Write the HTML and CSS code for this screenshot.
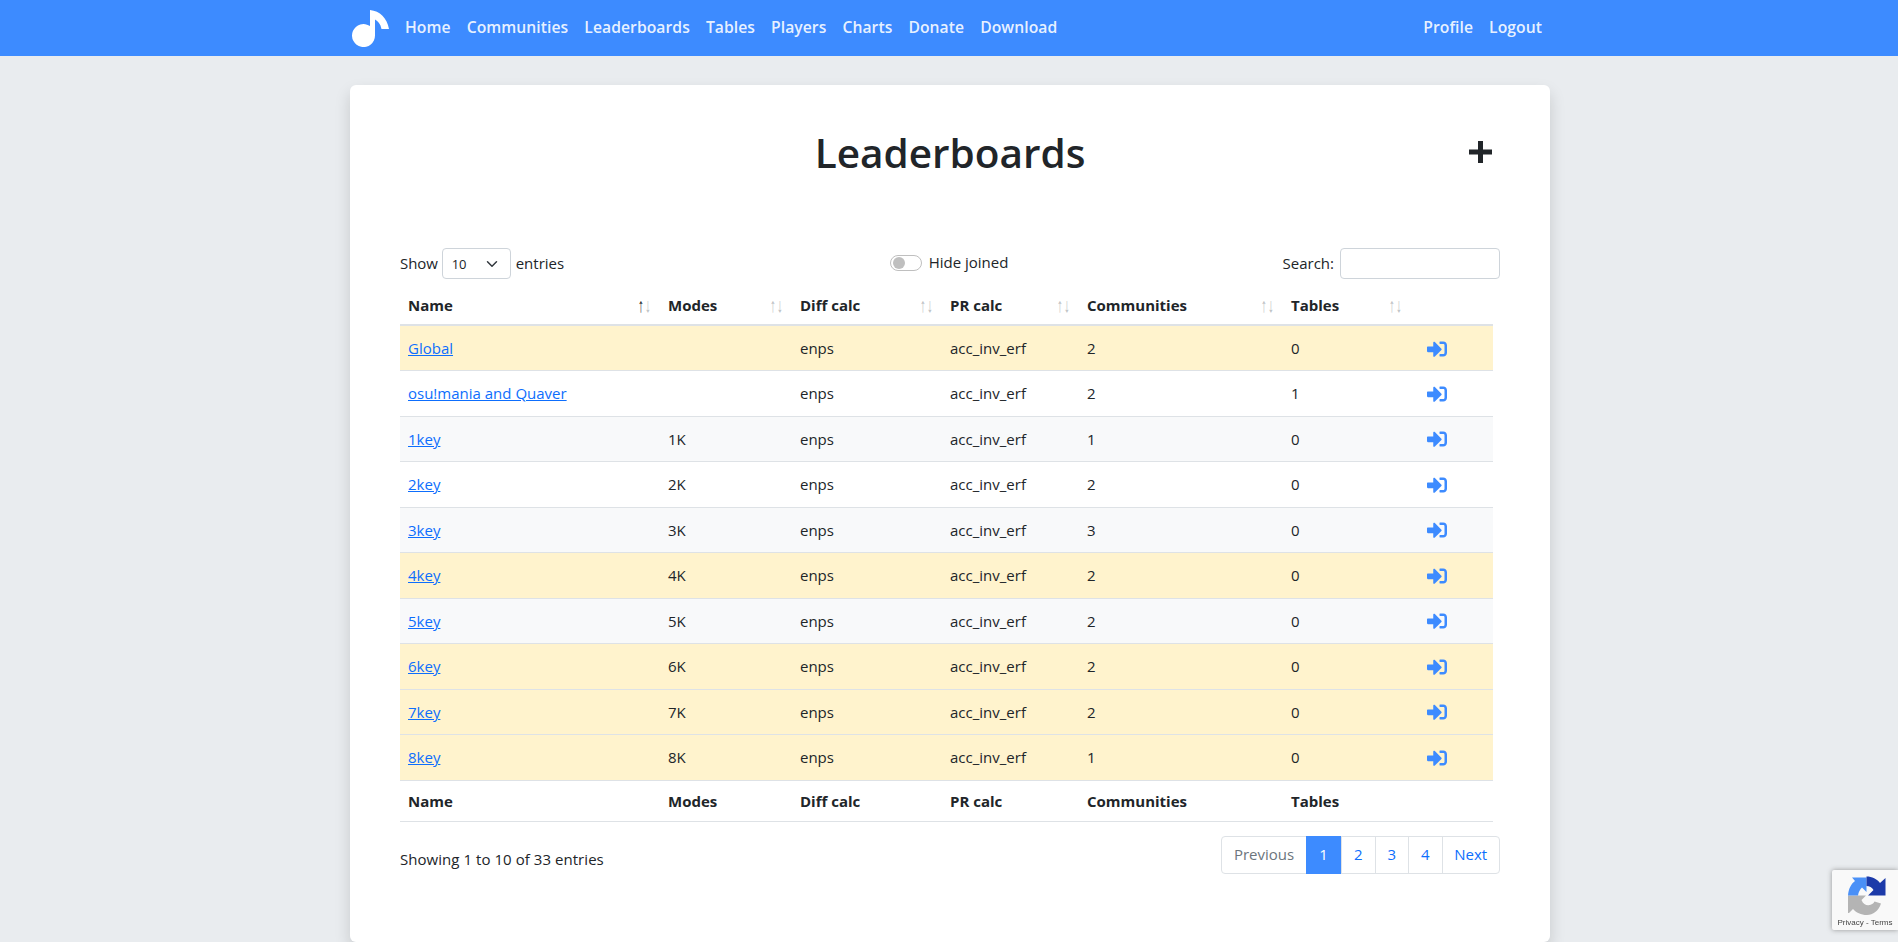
FILE: index.html
```html
<!DOCTYPE html>
<html lang="en">
<head>
<meta charset="utf-8">
<title>Leaderboards</title>
<link rel="stylesheet" href="styles.css">
</head>
<body>
<svg class="defs" width="0" height="0" aria-hidden="true">
  <symbol id="signin" viewBox="0 0 512 512"><path d="M416 448h-84c-6.600 0-12-5.400-12-12v-40c0-6.600 5.400-12 12-12h84c17.700 0 32-14.300 32-32V160c0-17.700-14.300-32-32-32h-84c-6.600 0-12-5.400-12-12V76c0-6.600 5.400-12 12-12h84c53 0 96 43 96 96v192c0 53-43 96-96 96zm-47-201L201 79c-15-15-41-4.500-41 17v96H24c-13.300 0-24 10.700-24 24v96c0 13.300 10.700 24 24 24h136v96c0 21.500 26 32 41 17l168-168c9.300-9.400 9.300-24.600 0-34z"/></symbol>
</svg>
<nav class="navbar">
  <div class="nav-inner">
    <svg class="logo" viewBox="350 7 40 40"><path d="M370 9C380 10 387 17 389 28H381.500C380.500 23 378 20 375 18.500V34.500A11.500 11.500 0 1 1 370 25Z"/></svg>
    <a class="nav-link" href="#">Home</a>
    <a class="nav-link" href="#">Communities</a>
    <a class="nav-link" href="#">Leaderboards</a>
    <a class="nav-link" href="#">Tables</a>
    <a class="nav-link" href="#">Players</a>
    <a class="nav-link" href="#">Charts</a>
    <a class="nav-link" href="#">Donate</a>
    <a class="nav-link" href="#">Download</a>
    <span class="nav-spacer"></span>
    <a class="nav-link" href="#">Profile</a>
    <a class="nav-link" href="#">Logout</a>
  </div>
</nav>
<main class="card">
  <div class="title-row">
    <h1 class="title">Leaderboards</h1>
    <svg class="plus" viewBox="0 0 23 22"><rect x="9" y="0" width="5" height="22"/><rect x="0" y="8.500" width="23" height="5"/></svg>
  </div>
  <div class="controls">
    <label class="show"><span class="show-word">Show</span><select class="select"><option>10</option><option>25</option><option>50</option></select><span class="entries">entries</span></label>
    <div class="toggle-group"><span class="toggle"><span class="knob"></span></span><span>Hide joined</span></div>
    <label class="search">Search: <input class="search-input" type="text"></label>
  </div>
  <table class="table">
    <colgroup><col class="c1"><col class="c2"><col class="c3"><col class="c4"><col class="c5"><col class="c6"><col class="c7"></colgroup>
    <thead>
      <tr>
        <th>Name<span class="sort"><b class="on">↑</b><b>↓</b></span></th>
        <th>Modes<span class="sort"><b>↑</b><b>↓</b></span></th>
        <th>Diff calc<span class="sort"><b>↑</b><b>↓</b></span></th>
        <th>PR calc<span class="sort"><b>↑</b><b>↓</b></span></th>
        <th>Communities<span class="sort"><b>↑</b><b>↓</b></span></th>
        <th>Tables<span class="sort"><b>↑</b><b>↓</b></span></th>
        <th></th>
      </tr>
    </thead>
    <tbody>
      <tr class="joined"><td><a href="#">Global</a></td><td></td><td>enps</td><td>acc_inv_erf</td><td>2</td><td>0</td><td class="act"><svg class="ic"><use href="#signin"/></svg></td></tr>
      <tr><td><a href="#">osu!mania and Quaver</a></td><td></td><td>enps</td><td>acc_inv_erf</td><td>2</td><td>1</td><td class="act"><svg class="ic"><use href="#signin"/></svg></td></tr>
      <tr class="odd"><td><a href="#">1key</a></td><td>1K</td><td>enps</td><td>acc_inv_erf</td><td>1</td><td>0</td><td class="act"><svg class="ic"><use href="#signin"/></svg></td></tr>
      <tr><td><a href="#">2key</a></td><td>2K</td><td>enps</td><td>acc_inv_erf</td><td>2</td><td>0</td><td class="act"><svg class="ic"><use href="#signin"/></svg></td></tr>
      <tr class="odd"><td><a href="#">3key</a></td><td>3K</td><td>enps</td><td>acc_inv_erf</td><td>3</td><td>0</td><td class="act"><svg class="ic"><use href="#signin"/></svg></td></tr>
      <tr class="joined"><td><a href="#">4key</a></td><td>4K</td><td>enps</td><td>acc_inv_erf</td><td>2</td><td>0</td><td class="act"><svg class="ic"><use href="#signin"/></svg></td></tr>
      <tr class="odd"><td><a href="#">5key</a></td><td>5K</td><td>enps</td><td>acc_inv_erf</td><td>2</td><td>0</td><td class="act"><svg class="ic"><use href="#signin"/></svg></td></tr>
      <tr class="joined"><td><a href="#">6key</a></td><td>6K</td><td>enps</td><td>acc_inv_erf</td><td>2</td><td>0</td><td class="act"><svg class="ic"><use href="#signin"/></svg></td></tr>
      <tr class="joined"><td><a href="#">7key</a></td><td>7K</td><td>enps</td><td>acc_inv_erf</td><td>2</td><td>0</td><td class="act"><svg class="ic"><use href="#signin"/></svg></td></tr>
      <tr class="joined"><td><a href="#">8key</a></td><td>8K</td><td>enps</td><td>acc_inv_erf</td><td>1</td><td>0</td><td class="act"><svg class="ic"><use href="#signin"/></svg></td></tr>
    </tbody>
    <tfoot>
      <tr><th>Name</th><th>Modes</th><th>Diff calc</th><th>PR calc</th><th>Communities</th><th>Tables</th><th></th></tr>
    </tfoot>
  </table>
  <div class="footer">
    <div class="info">Showing 1 to 10 of 33 entries</div>
    <div class="pagination">
      <a class="page prev" href="#">Previous</a>
      <a class="page current" href="#">1</a>
      <a class="page num" href="#">2</a>
      <a class="page num" href="#">3</a>
      <a class="page num" href="#">4</a>
      <a class="page next" href="#">Next</a>
    </div>
  </div>
</main>
<aside class="recaptcha">
  <svg class="rc-logo" viewBox="0 0 38 39">
    <path fill="#b4b4b4" d="M0 19.500H18L13.500 24C15 28 18 29.500 20.500 29.300C23.500 29 25.500 27.500 26.500 25.500L33 27.500C30.500 35 25 39 19 39C13 39 8 36.500 5 33L1 37H0Z"/>
    <path fill="#4a90f7" d="M0 19.500C.5 13 3 8 7 5L4 1.500H18.500V16L14 11.500C12 13.500 10.500 16 10 19.500Z"/>
    <path fill="#1c3aa9" d="M18.500 .5C24 .5 29 3 32 7L37.500 2V19.500H20L25.500 14C24 11.500 21.500 10 18.500 10Z"/>
  </svg>
  <div class="rc-text">Privacy - Terms</div>
</aside>
</body>
</html>
```
FILE: styles.css
```css
* { box-sizing: border-box; }
html, body { margin: 0; height: 100%; overflow: hidden; }
body {
  background: #e9ecef;
  color: #212529;
  font-family: "Open Sans", "Noto Sans", sans-serif;
  font-size: 15px;
  line-height: 21.5px;
}
.defs { position: absolute; }
a { color: #0d6efd; }

.navbar { height: 56px; background: #3d8bff; }
.nav-inner { width: 1200px; margin-left: 350px; height: 56px; display: flex; align-items: center; }
.logo { width: 40px; height: 40px; fill: #fff; margin-right: 7px; }
.nav-link { color: rgba(255,255,255,.9); text-decoration: none; font-weight: 600; font-size: 15.700px; letter-spacing: .06px; padding: 8px; white-space: nowrap; }
.nav-spacer { flex: 1; }

.card {
  width: 1200px; height: 857px; margin: 29px 0 0 350px;
  background: #fff; border-radius: 6px;
  box-shadow: 0 8px 16px rgba(0,0,0,.15);
  padding: 40px 50px 0;
}
.title-row { display: grid; grid-template-columns: 1fr auto 1fr; align-items: center; height: 56px; margin-bottom: 67px; }
.title { grid-column: 2; margin: 0; font-size: 40.500px; font-weight: 600; line-height: 56px; }
.plus { grid-column: 3; justify-self: end; width: 23px; height: 22px; fill: #212529; margin-right: 8px; margin-top: -3px; }

.controls { display: grid; grid-template-columns: 1fr auto 1fr; align-items: center; height: 31px; }
.show { display: flex; align-items: center; gap: 6px; }
.show-word { margin-right: -2px; letter-spacing: -.1px; }
.entries { margin-left: -1px; }
.select {
  appearance: none; width: 69px; height: 31px; padding: 0 0 0 9px;
  font: 13px "Open Sans", sans-serif; color: #212529; background: #fff url("data:image/svg+xml,%3csvg xmlns='http://www.w3.org/2000/svg' viewBox='0 0 16 16'%3e%3cpath fill='none' stroke='%23343a40' stroke-linecap='round' stroke-linejoin='round' stroke-width='2' d='M2 5l6 6 6-6'/%3e%3c/svg%3e") no-repeat right 12px center / 12px 12px;
  border: 1px solid #ced4da; border-radius: 4px;
}
.toggle-group { display: flex; align-items: center; gap: 7px; position: relative; top: -1px; left: -1px; }
.toggle { width: 32px; height: 16px; border: 1px solid #bfbfbf; border-radius: 8px; display: flex; align-items: center; padding-left: 2px; }
.knob { width: 12px; height: 12px; border-radius: 50%; background: #bfbfbf; }
.search { justify-self: end; display: flex; align-items: center; gap: 6px; }
.search-input { width: 160px; height: 31px; border: 1px solid #ced4da; border-radius: 4px; background: #fff; }

.table { width: 1093px; table-layout: fixed; border-collapse: collapse; margin-top: 6px; }
.c1 { width: 260px; } .c2 { width: 132px; } .c3 { width: 150px; } .c4 { width: 137px; }
.c5 { width: 204px; } .c6 { width: 128px; } .c7 { width: 82px; }
th, td { padding: 1px 8px 0; text-align: left; vertical-align: middle; }
thead th { height: 40px; padding-top: 2px; border-bottom: 2px solid #dee2e6; position: relative; font-weight: 700; }
tbody td { height: 45.500px; border-bottom: 1px solid #dee2e6; }
tfoot th { height: 41.500px; border-bottom: 1px solid #dee2e6; font-weight: 700; }
.joined td { background: #fff3cd; }
.odd td { background: #f8f9fa; }
.sort { position: absolute; right: 8.500px; top: 50%; transform: translateY(-50%); font: 400 20px/20px "Liberation Sans", sans-serif; display: flex; }
.sort b { font-weight: 400; color: #bcc0c4; width: 7.500px; display: flex; justify-content: center; transform: scaleX(.6); }
.sort b.on { color: #212529; }
.act { padding-left: 16px; }
.ic { display: block; width: 20px; height: 20px; fill: #3d8bff; }

.footer { display: flex; justify-content: space-between; align-items: center; margin-top: 14px; }
.info { padding-top: 9px; letter-spacing: .05px; }
.pagination { display: flex; height: 38px; width: 279px; border: 1px solid #dee2e6; border-radius: 4px; }
.page { display: flex; align-items: center; justify-content: center; text-decoration: none; color: #0d6efd; border-left: 1px solid #dee2e6; width: 34px; }
.prev { width: 84px; color: #6c757d; border-left: 0; }
.current { width: 35px; background: #3d8bff; color: #fff; border-left: 0; margin: -1px 0; }
.num { width: 33.500px; }
.next { flex: 1; width: auto; }

.recaptcha {
  position: fixed; right: 0; bottom: 12px; width: 66px; height: 60px;
  background: #f9f9f9; border-radius: 2px 0 0 2px; box-shadow: 0 0 5px rgba(128,128,128,.8);
  display: flex; flex-direction: column; align-items: center;
}
.rc-logo { width: 38px; height: 39px; margin-top: 6px; margin-left: 4px; }
.rc-text { font: 8px/12px "Liberation Sans", sans-serif; color: #444; white-space: nowrap; margin-top: 2px; }
```
